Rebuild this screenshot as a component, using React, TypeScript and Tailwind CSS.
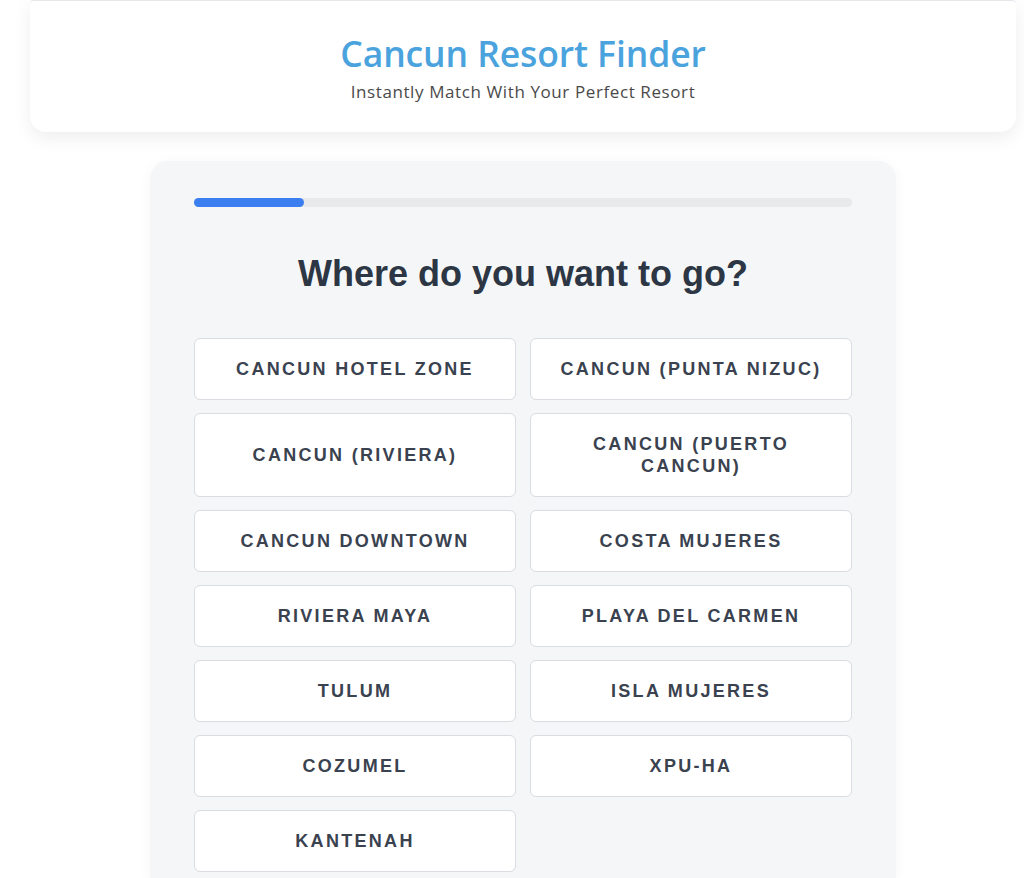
import React from 'react';

const places = [
  'Cancun Hotel Zone',
  'Cancun (Punta Nizuc)',
  'Cancun (Riviera)',
  'Cancun (Puerto Cancun)',
  'Cancun Downtown',
  'Costa Mujeres',
  'Riviera Maya',
  'Playa Del Carmen',
  'Tulum',
  'Isla Mujeres',
  'Cozumel',
  'Xpu-Ha',
  'Kantenah',
];

export default function App() {
  return (
    <div className="min-h-[878px] bg-white pl-[30px] pr-[8px]">
      {/* Header */}
      <header className="rounded-b-2xl rounded-t-sm border-t border-gray-200 bg-white pb-[29px] pt-[31px] text-center shadow-[0_6px_18px_rgba(0,0,0,0.07)]">
        <h1 className="font-['Open_Sans',sans-serif] text-[35.5px] font-semibold leading-[42px] tracking-[-0.1px] text-[#4ba3de]">
          Cancun Resort Finder
        </h1>
        <p className="mt-[7px] font-['Open_Sans',sans-serif] text-[17px] leading-[22px] tracking-[0.6px] text-[#4a4a4a]">
          Instantly Match With Your Perfect Resort
        </p>
      </header>

      {/* Quiz card */}
      <main className="mx-auto mt-[29px] w-[746px] rounded-t-[18px] bg-[#f5f6f8] px-[44px] pb-[6px] pt-[37px] shadow-[0_2px_14px_rgba(0,0,0,0.04)]">
        <div className="h-[9px] w-full rounded-full bg-[#e8e9eb]">
          <div className="h-full w-[110px] rounded-full bg-[#3b7ef0]" />
        </div>

        <h2 className="mt-[45px] text-center font-['Liberation_Sans',Arial,sans-serif] text-[36px] font-bold leading-[44px] text-[#2d3644]">
          Where do you want to go?
        </h2>

        <div className="mt-[42px] grid grid-cols-2 gap-x-[14px] gap-y-[13px]">
          {places.map((p) => (
            <button
              key={p}
              className="rounded-[6px] border border-[#d9dce0] bg-white px-[22px] py-[19px] text-center font-['Liberation_Sans',Arial,sans-serif] text-[18px] font-bold uppercase leading-[22px] tracking-[2.3px] text-[#3a4250]"
            >
              {p}
            </button>
          ))}
        </div>
      </main>
    </div>
  );
}
